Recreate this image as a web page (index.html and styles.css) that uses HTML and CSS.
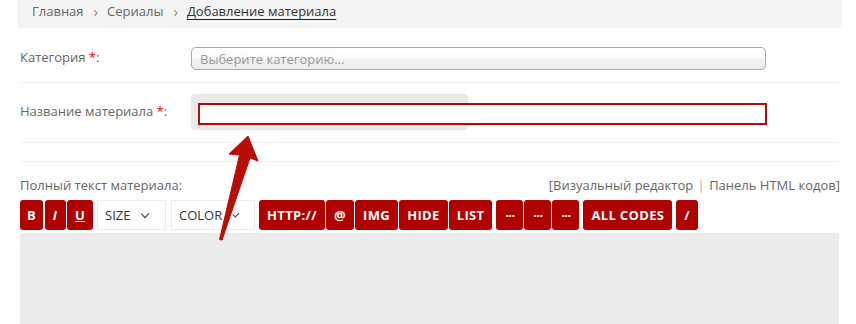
FILE: index.html
```html
<!DOCTYPE html>
<html lang="ru">
<head>
    <meta charset="UTF-8">
    <meta name="viewport" content="width=device-width, initial-scale=1.0">
    <title>Добавление материала</title>
    <link rel="stylesheet" href="styles.css">
</head>
<body>
    <div class="page">
        <div class="crumbs">
            <a href="#">Главная</a>
            <span class="sep">›</span>
            <a href="#">Сериалы</a>
            <span class="sep">›</span>
            <span class="current">Добавление материала</span>
        </div>

        <div class="form">
            <div class="row row-cat">
                <label class="label">Категория <span class="req">*</span>:</label>
                <div class="select">Выберите категорию...</div>
            </div>

            <div class="row row-title">
                <label class="label">Название материала <span class="req">*</span>:</label>
                <div class="title-wrap">
                    <input type="text" class="title-input">
                </div>
            </div>

            <div class="row row-empty"></div>

            <div class="editor-head">
                <span>Полный текст материала:</span>
                <span class="modes">[<a href="#">Визуальный редактор</a> <span class="bar">|</span> <a href="#">Панель HTML кодов</a>]</span>
            </div>

            <div class="toolbar">
                <div class="group group-style">
                    <button class="btn btn-b">B</button>
                    <button class="btn btn-i"><i>I</i></button>
                    <button class="btn btn-u"><u>U</u></button>
                </div>
                <div class="drop drop-size">SIZE <span class="chev"></span></div>
                <div class="drop drop-color">COLOR <span class="chev"></span></div>
                <div class="group">
                    <button class="btn">HTTP://</button>
                    <button class="btn">@</button>
                    <button class="btn">IMG</button>
                    <button class="btn">HIDE</button>
                    <button class="btn">LIST</button>
                </div>
                <div class="group">
                    <button class="btn btn-dots">&middot;&middot;&middot;</button>
                    <button class="btn btn-dots">&middot;&middot;&middot;</button>
                    <button class="btn btn-dots">&middot;&middot;&middot;</button>
                </div>
                <div class="group">
                    <button class="btn">ALL CODES</button>
                </div>
                <div class="group">
                    <button class="btn">/</button>
                </div>
            </div>

            <div class="editor"></div>
        </div>

        <!-- стрелка-указатель поверх формы -->
        <svg class="arrow" width="856" height="324" viewBox="0 0 856 324">
            <path d="M248 136 L258 161 L250 158 L222 240 L219.5 239.5 L239.5 155 L229 154 Z" fill="#b80c06" stroke="#b80c06" stroke-width="1" stroke-linejoin="round"/>
        </svg>
    </div>
</body>
</html>
```

FILE: styles.css
```css
body {
    font-family: "Open Sans", "Liberation Sans", sans-serif;
    font-size: 13px;
    line-height: 18px;
    color: #666;
    margin: 0;
    padding: 0;
    background-color: #fff;
}
a {
    color: #666;
    text-decoration: none;
}
.page {
    position: relative;
    padding: 0 14px 0 17px;
    height: 324px;
    overflow: hidden;
}
.crumbs {
    display: flex;
    align-items: flex-start;
    height: 28px;
    box-sizing: border-box;
    padding: 2px 0 0 15px;
    background-color: #f4f4f4;
    border-radius: 0 0 4px 4px;
}
.crumbs .sep {
    color: #888;
    font-size: 15px;
    margin: 0 9px 0 10px;
}
.crumbs .current {
    color: #333;
    text-decoration: underline;
    text-decoration-color: #222;
    text-underline-offset: 3px;
}
.form {
    padding: 0 3px;
}
.row {
    display: flex;
    align-items: center;
    border-bottom: 1px solid #eee;
}
.label {
    width: 171px;
    flex-shrink: 0;
}
.req {
    color: #e00;
}
.row-cat {
    padding: 19px 0 12px;
}
.row-cat .label {
    padding-bottom: 3px;
}
.select {
    width: 575px;
    height: 23px;
    box-sizing: border-box;
    padding: 3px 0 0 8px;
    line-height: 17px;
    color: #999;
    border: 1px solid #aaa;
    border-radius: 5px;
    background: linear-gradient(#fff 0%, #fcfcfc 45%, #f0f0f0 55%, #efefef 100%);
}
.row-title {
    padding: 11px 0 12px;
}
.row-title .label {
    padding-bottom: 2px;
}
.title-wrap {
    width: 277px;
    height: 36px;
    box-sizing: border-box;
    padding: 9px 0 0 7px;
    background-color: #e9e9e9;
    border-radius: 3px;
}
.title-input {
    display: block;
    width: 569px;
    height: 22px;
    box-sizing: border-box;
    margin: 0;
    border: 2px solid #b80a0a;
    background-color: #fff;
    outline: none;
}
.row-empty {
    height: 18px;
}
.editor-head {
    display: flex;
    justify-content: space-between;
    margin-top: 14px;
}
.modes {
    margin-right: -1px;
}
.modes .bar {
    color: #c99;
    margin: 0 1px;
}
.toolbar {
    display: flex;
    align-items: flex-start;
    gap: 4px;
    margin-top: 6px;
}
.group {
    display: flex;
    gap: 1px;
}
.group-style {
    gap: 1.5px;
}
.btn {
    height: 30px;
    padding: 0 8px;
    border: none;
    border-radius: 3px;
    background-color: #b00000;
    color: #fff;
    font-family: "Open Sans", "Liberation Sans", sans-serif;
    font-size: 13px;
    font-weight: bold;
    line-height: 30px;
    letter-spacing: 0.35px;
}
.btn-b {
    width: 23px;
    padding: 0;
}
.btn-i {
    width: 21px;
    padding: 0;
}
.btn-u {
    width: 26px;
    padding: 0;
}
.btn-dots {
    width: 27px;
    padding: 0;
    letter-spacing: -0.5px;
}
.drop {
    display: flex;
    align-items: center;
    height: 30px;
    box-sizing: border-box;
    padding: 0 16px 0 7px;
    border: 1px solid #ececec;
    background-color: #fff;
    color: #333;
}
.drop-size {
    width: 69px;
    margin-right: 1px;
}
.drop-color {
    width: 84px;
}
.chev {
    width: 5px;
    height: 5px;
    margin: -3px 0 0 12px;
    border-right: 1.5px solid #333;
    border-bottom: 1.5px solid #333;
    transform: rotate(45deg);
}
.editor {
    height: 100px;
    margin-top: 3px;
    background-color: #ebebeb;
    border-radius: 3px 3px 0 0;
}
.arrow {
    position: absolute;
    left: 0;
    top: 0;
    pointer-events: none;
}
```
